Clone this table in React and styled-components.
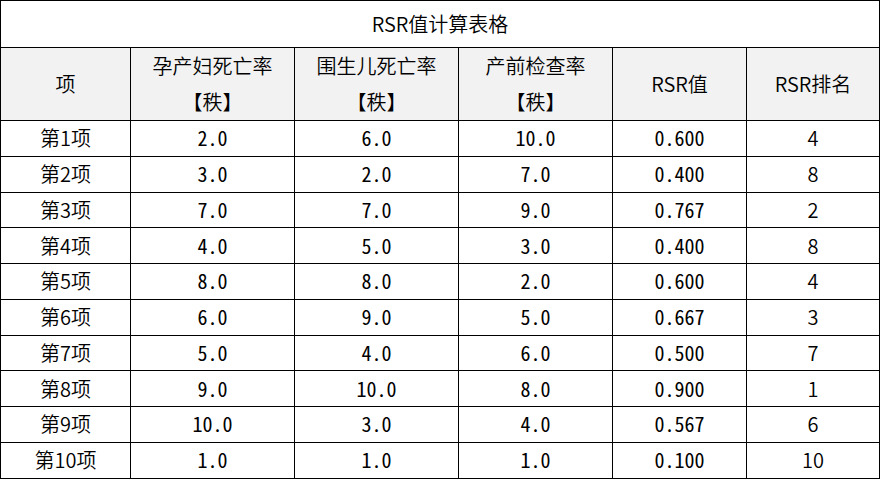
import React from "react";
import styled, { createGlobalStyle } from "styled-components";

const Global = createGlobalStyle`
  html, body { margin: 0; padding: 0; background: #fff; }
  body { font-family: "Noto Sans CJK SC", "Noto Sans", sans-serif; color: #000; }
`;

const Table = styled.table`
  border-collapse: collapse;
  table-layout: fixed;
  width: 879px;
  font-size: 20px;
  font-weight: 350;
`;

const TitleCell = styled.th`
  height: 46px;
  padding: 0;
  border: 1px solid #000;
  font-weight: 350;
  text-align: center;
  background: #fff;
  line-height: 36px;
`;

const HeadCell = styled.th`
  height: 72px;
  padding: 0;
  border: 1px solid #000;
  font-weight: 350;
  text-align: center;
  background: #f2f2f2;
  line-height: 36px;
`;

const Cell = styled.td`
  height: 34.75px;
  padding: 0;
  border: 1px solid #000;
  text-align: center;
  line-height: 34px;
  font-weight: ${(p) => (p.$mono ? 300 : 350)};
  font-family: ${(p) =>
    p.$mono
      ? `"Noto Sans Mono CJK SC", "DejaVu Sans Mono", monospace`
      : `"Noto Sans CJK SC", "Noto Sans", sans-serif`};
`;

const widths = [130, 164, 164, 154, 134, 133];

const rows = [
  ["第1项", "2.0", "6.0", "10.0", "0.600", "4"],
  ["第2项", "3.0", "2.0", "7.0", "0.400", "8"],
  ["第3项", "7.0", "7.0", "9.0", "0.767", "2"],
  ["第4项", "4.0", "5.0", "3.0", "0.400", "8"],
  ["第5项", "8.0", "8.0", "2.0", "0.600", "4"],
  ["第6项", "6.0", "9.0", "5.0", "0.667", "3"],
  ["第7项", "5.0", "4.0", "6.0", "0.500", "7"],
  ["第8项", "9.0", "10.0", "8.0", "0.900", "1"],
  ["第9项", "10.0", "3.0", "4.0", "0.567", "6"],
  ["第10项", "1.0", "1.0", "1.0", "0.100", "10"],
];

export default function App() {
  return (
    <>
      <Global />
      <Table>
        <colgroup>
          {widths.map((w, i) => (
            <col key={i} style={{ width: w }} />
          ))}
        </colgroup>
        <thead>
          <tr>
            <TitleCell colSpan={6}>RSR值计算表格</TitleCell>
          </tr>
          <tr>
            <HeadCell>项</HeadCell>
            <HeadCell>
              孕产妇死亡率
              <br />【秩】
            </HeadCell>
            <HeadCell>
              围生儿死亡率
              <br />【秩】
            </HeadCell>
            <HeadCell>
              产前检查率
              <br />【秩】
            </HeadCell>
            <HeadCell>RSR值</HeadCell>
            <HeadCell>RSR排名</HeadCell>
          </tr>
        </thead>
        <tbody>
          {rows.map((r) => (
            <tr key={r[0]}>
              {r.map((v, i) => (
                <Cell key={i} $mono={i > 0 && i < 5}>
                  {v}
                </Cell>
              ))}
            </tr>
          ))}
        </tbody>
      </Table>
    </>
  );
}
